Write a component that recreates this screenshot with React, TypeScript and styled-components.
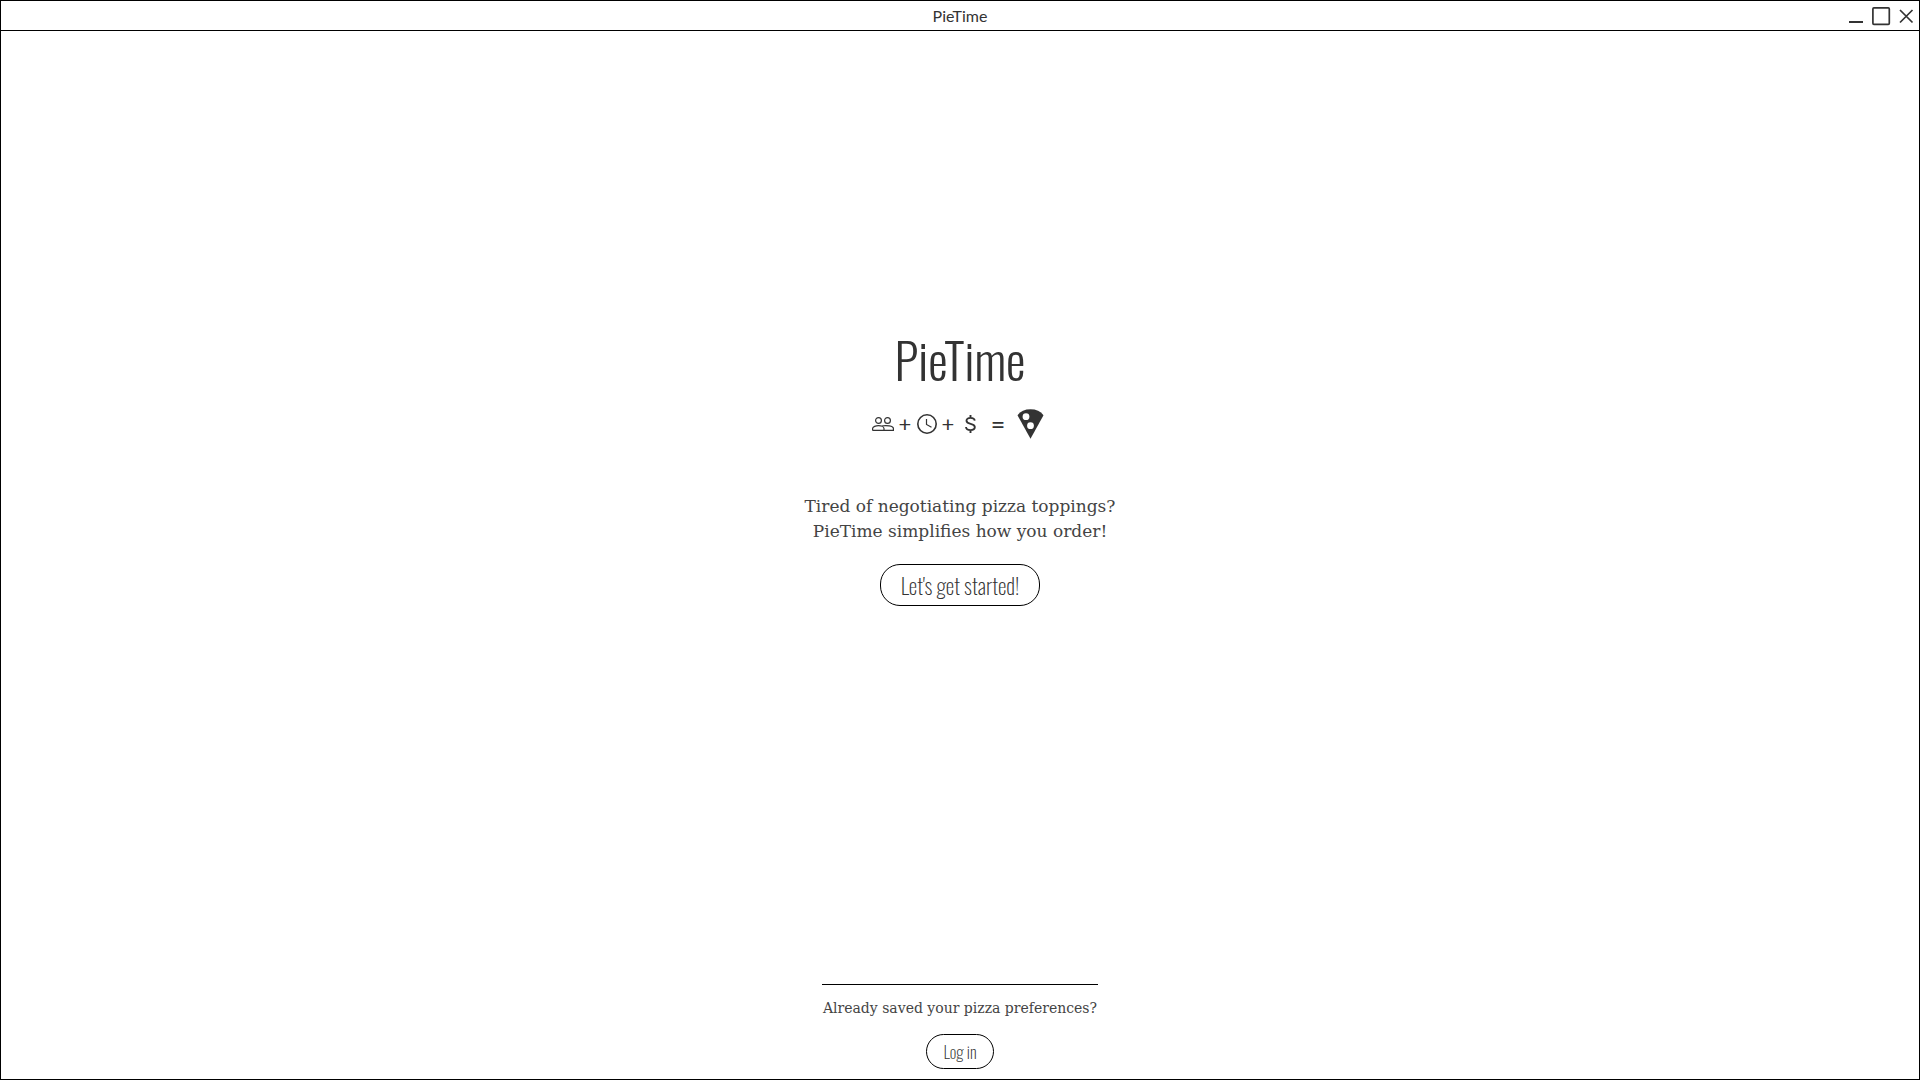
import React from "react";
import styled, { createGlobalStyle } from "styled-components";

const display = `Oswald, "Roboto Condensed", "Liberation Sans Narrow", sans-serif`;
const slab = `"Roboto Slab", "DejaVu Serif", serif`;
const ink = "#333333";
const softInk = "#444444";

const GlobalStyle = createGlobalStyle`
  *, *::before, *::after { box-sizing: border-box; }
  body { margin: 0; background: #ffffff; color: ${ink}; }
`;

const Window = styled.div`
  min-height: 100vh;
  display: flex;
  flex-direction: column;
  border: 1px solid #000000;
  background: #ffffff;
`;

const TitleBar = styled.header`
  display: grid;
  grid-template-columns: 1fr auto 1fr;
  align-items: center;
  height: 30px;
  border-bottom: 1px solid #000000;
`;

const WindowTitle = styled.span`
  grid-column: 2;
  font: 400 16px/20px Lato, sans-serif;
`;

const WindowControls = styled.div`
  justify-self: end;
  display: flex;
  gap: 5px;
  padding-right: 3px;
`;

const ControlButton = styled.button`
  display: flex;
  padding: 0;
  border: 0;
  background: none;
  color: ${ink};
`;

const Main = styled.main`
  flex: 1;
  display: flex;
  flex-direction: column;
  align-items: center;
  padding: 292px 16px 10px;
  text-align: center;
`;

const Heading = styled.h1`
  margin: 0;
  font: 300 49px/72px ${display};
`;

const Equation = styled.div`
  display: flex;
  align-items: center;
  height: 30px;
  margin-top: 14px;
`;

const Operator = styled.span<{ $wide?: boolean }>`
  width: ${(p) => (p.$wide ? 37 : 23)}px;
  font: 400 ${(p) => (p.$wide ? 25 : 22)}px/24px Lato, sans-serif;
`;

const Tagline = styled.p`
  margin: 55px 0 20px;
  color: ${softInk};
  font: 400 17px/25px ${slab};
`;

const PillButton = styled.button<{ $small?: boolean }>`
  height: ${(p) => (p.$small ? 35 : 42)}px;
  padding: 0 ${(p) => (p.$small ? 16 : 20)}px;
  border: 1px solid #000000;
  border-radius: 20px;
  background: #ffffff;
  color: ${ink};
  font: 200 ${(p) => (p.$small ? 17 : 22)}px/24px ${display};
`;

const Footer = styled.footer`
  display: flex;
  flex-direction: column;
  align-items: center;
  margin-top: auto;
`;

const Prompt = styled.p`
  margin: 0 0 15px;
  padding: 12px 1px 0;
  border-top: 1px solid #000000;
  color: ${softInk};
  font: 400 14px/22px ${slab};
`;

const PeopleIcon = () => (
  <svg width="22" height="14" viewBox="0 0 22 14" fill="none" stroke={ink} strokeWidth="1.2" aria-hidden="true">
    <circle cx="6.5" cy="3.5" r="2.9" />
    <circle cx="15.5" cy="3.5" r="2.9" />
    <path d="M.6 13.4v-1.9C.6 9.7 4 8.7 6.5 8.7s5.500 1 5.500 2.800v1.900M9.500 9c4.800-1 11.900-.1 11.900 2.500v1.900H.6" />
  </svg>
);

const ClockIcon = () => (
  <svg width="20" height="20" viewBox="0 0 20 20" fill="none" stroke={ink} aria-hidden="true">
    <circle cx="10" cy="10" r="9.2" strokeWidth="1.6" />
    <path d="M9.5 5v5.500l5 2.800" strokeWidth="1.2" />
  </svg>
);

const DollarIcon = () => (
  <svg width="20" height="20" viewBox="0 0 20 20" fill="none" stroke={ink} strokeWidth="1.9" aria-hidden="true">
    <path d="M10.500 1v3M10.500 16v3M14.700 6.600C14.500 4.700 13 3.900 10.500 3.900S6.500 5 6.500 6.800c0 4.200 8.300 2 8.300 6.200 0 2-1.800 3.100-4.300 3.100s-4.300-1.100-4.500-3.100" />
  </svg>
);

const PizzaIcon = () => (
  <svg width="32" height="30" viewBox="0 0 32 30" aria-hidden="true">
    <path d="M.5 6.200Q5 .3 13.500.3T26.500 6.200L13.500 29.800z" fill={ink} />
    <circle cx="9" cy="7.700" r="3.400" fill="#ffffff" />
    <circle cx="13.500" cy="16.700" r="3.400" fill="#ffffff" />
  </svg>
);

export default function App() {
  return (
    <Window>
      <GlobalStyle />
      <TitleBar>
        <WindowTitle>PieTime</WindowTitle>
        <WindowControls>
          <ControlButton aria-label="Minimize">
            <svg width="20" height="20" viewBox="0 0 20 20" stroke={ink} strokeWidth="2"><path d="M3 16h14" /></svg>
          </ControlButton>
          <ControlButton aria-label="Maximize">
            <svg width="20" height="20" viewBox="0 0 20 20" fill="none" stroke={ink} strokeWidth="1.7"><rect x="1.9" y="1.9" width="16.4" height="16.4" rx="1" /></svg>
          </ControlButton>
          <ControlButton aria-label="Close">
            <svg width="20" height="20" viewBox="0 0 20 20" stroke={ink} strokeWidth="1.7"><path d="M4 4l12.500 12.500M16.500 4L4 16.500" /></svg>
          </ControlButton>
        </WindowControls>
      </TitleBar>
      <Main>
        <Heading>PieTime</Heading>
        <Equation>
          <PeopleIcon />
          <Operator>+</Operator>
          <ClockIcon />
          <Operator>+</Operator>
          <DollarIcon />
          <Operator $wide>=</Operator>
          <PizzaIcon />
        </Equation>
        <Tagline>
          Tired of negotiating pizza toppings?
          <br />
          PieTime simplifies how you order!
        </Tagline>
        <PillButton>Let's get started!</PillButton>
        <Footer>
          <Prompt>Already saved your pizza preferences?</Prompt>
          <PillButton $small>Log in</PillButton>
        </Footer>
      </Main>
    </Window>
  );
}
